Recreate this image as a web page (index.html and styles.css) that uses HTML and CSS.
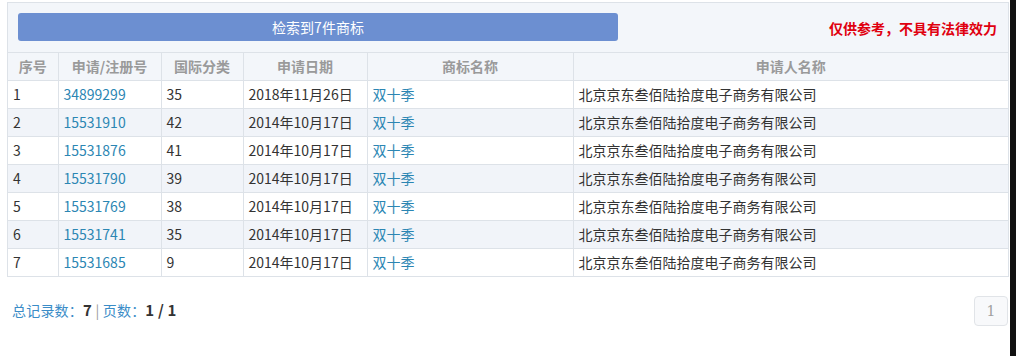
FILE: index.html
```html
<!DOCTYPE html>
<html lang="zh-CN">
<head>
<meta charset="utf-8">
<link rel="stylesheet" href="styles.css">
</head>
<body>
<div class="page">
  <div class="content">
    <div class="panel">
      <div class="bar">
        <div class="count-btn">检索到7件商标</div>
        <div class="notice">仅供参考，不具有法律效力</div>
      </div>
      <table class="grid">
        <colgroup>
          <col class="c1"><col class="c2"><col class="c3"><col class="c4"><col class="c5"><col class="c6">
        </colgroup>
        <thead>
          <tr><th>序号</th><th>申请/注册号</th><th>国际分类</th><th>申请日期</th><th>商标名称</th><th>申请人名称</th></tr>
        </thead>
        <tbody>
          <tr><td>1</td><td><a class="lk">34899299</a></td><td>35</td><td>2018年11月26日</td><td><a class="lk">双十季</a></td><td>北京京东叁佰陆拾度电子商务有限公司</td></tr>
          <tr><td>2</td><td><a class="lk">15531910</a></td><td>42</td><td>2014年10月17日</td><td><a class="lk">双十季</a></td><td>北京京东叁佰陆拾度电子商务有限公司</td></tr>
          <tr><td>3</td><td><a class="lk">15531876</a></td><td>41</td><td>2014年10月17日</td><td><a class="lk">双十季</a></td><td>北京京东叁佰陆拾度电子商务有限公司</td></tr>
          <tr><td>4</td><td><a class="lk">15531790</a></td><td>39</td><td>2014年10月17日</td><td><a class="lk">双十季</a></td><td>北京京东叁佰陆拾度电子商务有限公司</td></tr>
          <tr><td>5</td><td><a class="lk">15531769</a></td><td>38</td><td>2014年10月17日</td><td><a class="lk">双十季</a></td><td>北京京东叁佰陆拾度电子商务有限公司</td></tr>
          <tr><td>6</td><td><a class="lk">15531741</a></td><td>35</td><td>2014年10月17日</td><td><a class="lk">双十季</a></td><td>北京京东叁佰陆拾度电子商务有限公司</td></tr>
          <tr><td>7</td><td><a class="lk">15531685</a></td><td>9</td><td>2014年10月17日</td><td><a class="lk">双十季</a></td><td>北京京东叁佰陆拾度电子商务有限公司</td></tr>
        </tbody>
      </table>
    </div>
    <div class="footer">
      <div class="summary"><span class="lbl">总记录数：</span><b>7</b> <span class="sep">|</span> <span class="lbl">页数：</span><b>1 / 1</b></div>
      <div class="pager"><span class="pg">1</span></div>
    </div>
  </div>
  <div class="edge"></div>
</div>
</body>
</html>
```

FILE: styles.css
```css
html, body {
  margin: 0;
  padding: 0;
  background: #fff;
}
body {
  font-family: "Noto Sans CJK SC", "Noto Sans", sans-serif;
  font-size: 14px;
  color: #333;
}
.page {
  display: flex;
  height: 356px;
}
.content {
  flex: 1;
  padding: 2px 1px 0 7px;
}
.edge {
  width: 6px;
  background: #111;
}
.panel {
  border: 1px solid #dde2e8;
  width: 1000px;
}
.bar {
  background: #f3f6fa;
  height: 50px;
  display: flex;
  align-items: flex-start;
  justify-content: space-between;
  padding: 10px 11px 0 10px;
  box-sizing: border-box;
  border-bottom: 1px solid #dde2e8;
}
.count-btn {
  width: 600px;
  height: 28px;
  background: #6c8fd1;
  border-radius: 3px;
  color: #fff;
  font-size: 14px;
  line-height: 28px;
  text-align: center;
}
.notice {
  color: #e0000f;
  font-weight: bold;
  font-size: 14px;
  line-height: 28px;
  margin-top: 1px;
}
.grid {
  width: 1000px;
  border-collapse: collapse;
  table-layout: fixed;
}
.c1 { width: 50px; }
.c2 { width: 103px; }
.c3 { width: 82px; }
.c4 { width: 124px; }
.c5 { width: 206px; }
.c6 { width: 435px; }
.grid th, .grid td {
  height: 27px;
  border-top: 1px solid #dde2e8;
  border-left: 1px solid #dde2e8;
  padding: 0 5px;
  white-space: nowrap;
  overflow: hidden;
  line-height: 27px;
}
.grid tr > :first-child { border-left: none; }
.grid thead tr:first-child th { border-top: none; }
.grid th {
  background: #f3f6fa;
  color: #9a9a9a;
  font-weight: bold;
  font-size: 14px;
  text-align: center;
}
.grid td {
  text-align: left;
  font-size: 14px;
  color: #333;
}
.grid tbody tr:nth-child(even) td { background: #f1f4f9; }
.lk {
  color: #2b86b3;
  text-decoration: none;
}
.footer {
  display: flex;
  justify-content: space-between;
  align-items: flex-start;
  padding: 20px 0 0 5px;
  width: 1001px;
  box-sizing: border-box;
}
.summary {
  font-size: 14px;
  color: #333;
  margin-top: 2px;
  letter-spacing: 0.2px;
}
.summary .lbl { color: #3a8cc7; }
.summary b { color: #333; font-size: 15px; }
.summary .sep { color: #999; }
.pager {
  display: flex;
}
.pg {
  width: 32px;
  height: 28px;
  border: 1px solid #e1e4e8;
  border-radius: 4px;
  background: #f8f9fb;
  color: #a0a0a0;
  font-family: "DejaVu Serif", serif;
  font-size: 14px;
  line-height: 28px;
  text-align: center;
  margin-top: -1px;
}
```
